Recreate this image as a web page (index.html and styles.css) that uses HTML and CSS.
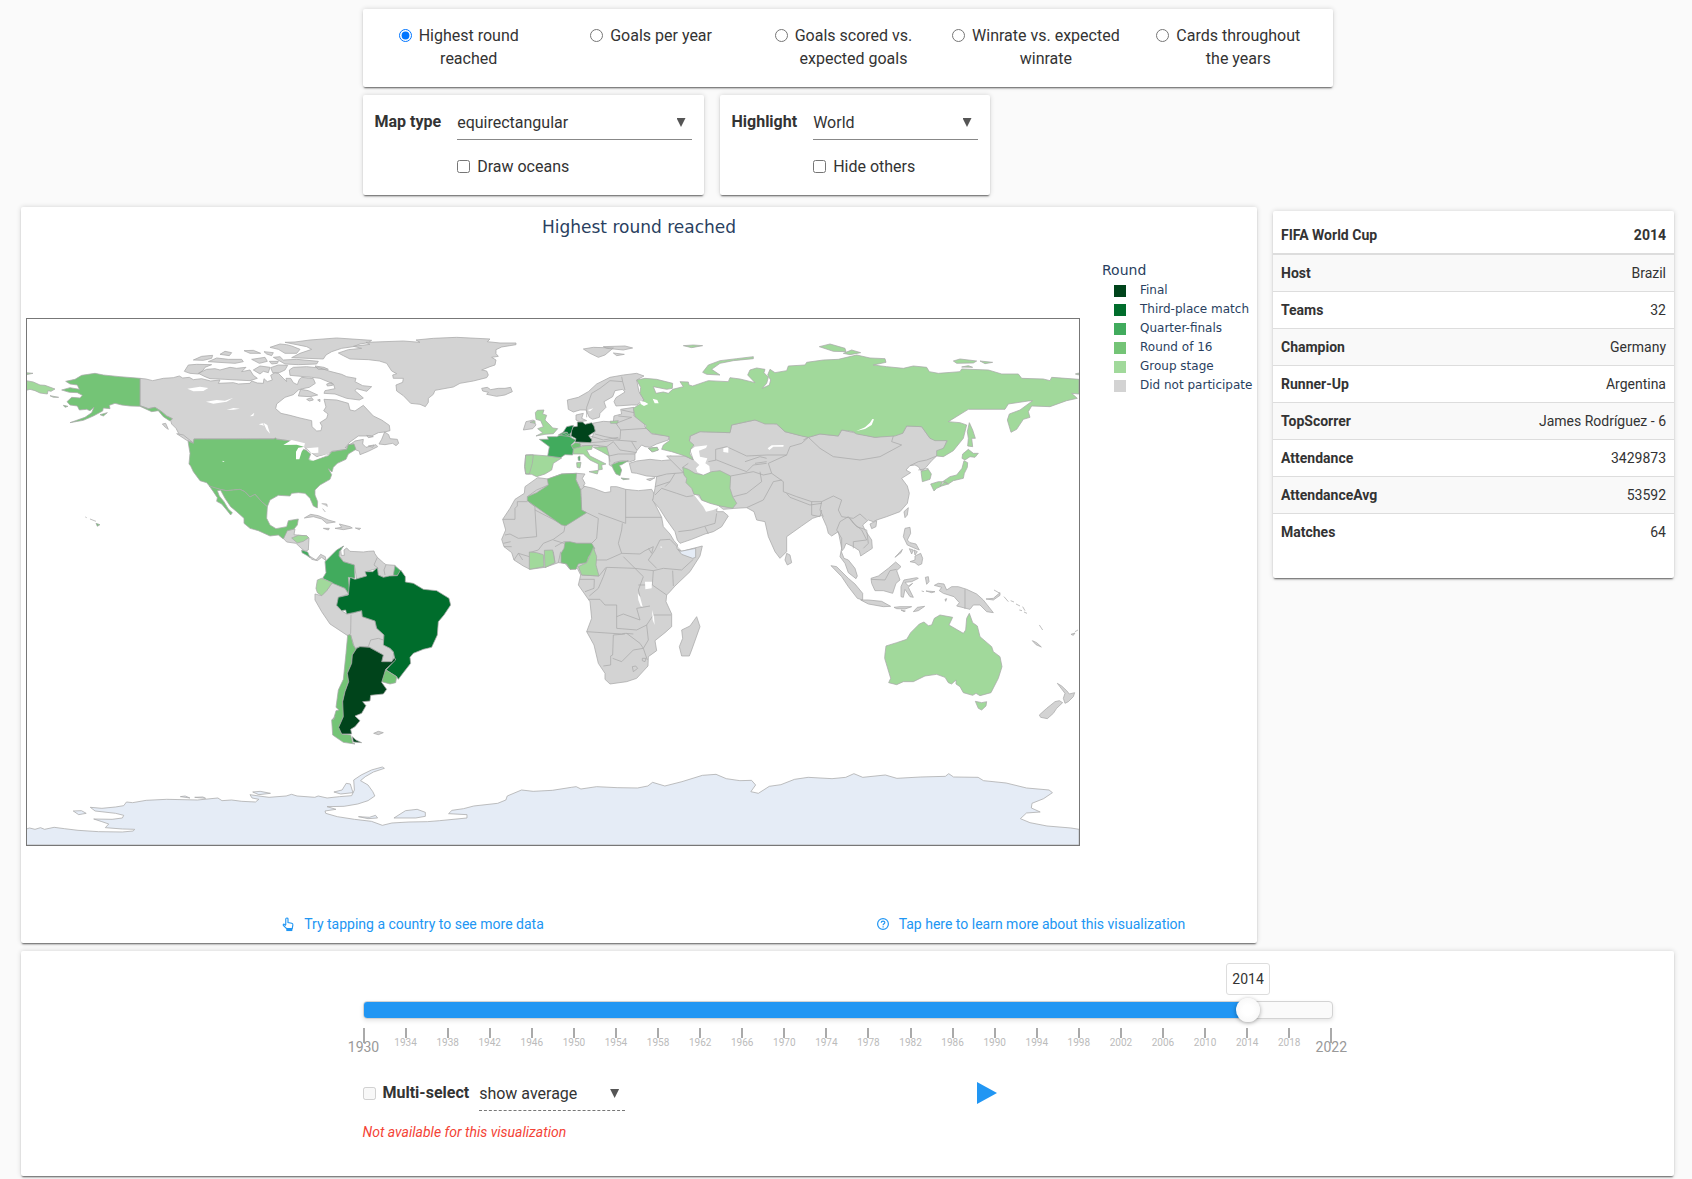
FILE: index.html
```html
<!DOCTYPE html>
<html lang="en">
<head>
<meta charset="utf-8">
<meta name="viewport" content="width=device-width, initial-scale=1">
<title>FIFA World Cup – Highest round reached</title>
<link rel="stylesheet" href="styles.css">
</head>
<body>
<main class="page">
  <div class="controls">
    <form class="card views">
      <label class="view"><input type="radio" name="view" checked><span>Highest round<br>reached</span></label>
      <label class="view"><input type="radio" name="view"><span>Goals per year</span></label>
      <label class="view"><input type="radio" name="view"><span>Goals scored vs.<br>expected goals</span></label>
      <label class="view"><input type="radio" name="view"><span>Winrate vs. expected<br>winrate</span></label>
      <label class="view"><input type="radio" name="view"><span>Cards throughout<br>the years</span></label>
    </form>
    <div class="options">
      <div class="card option option-wide">
        <label class="option-name" for="map-type">Map type</label>
        <span class="picker"><select id="map-type"><option>equirectangular</option></select></span>
        <label class="tick-option"><input type="checkbox">Draw oceans</label>
      </div>
      <div class="card option">
        <label class="option-name" for="highlight">Highlight</label>
        <span class="picker"><select id="highlight"><option>World</option></select></span>
        <label class="tick-option"><input type="checkbox">Hide others</label>
      </div>
    </div>
  </div>

  <div class="main-row">
    <section class="card plot">
      <h1 class="plot-title">Highest round reached</h1>
      <div class="plot-body">
        <svg class="map" viewBox="26 318 1054 528" role="img" aria-label="World map">
          <!-- Antarctica -->
          <g transform="translate(20 740) scale(.6824 .3333)">
            <path class="land empty" d="M9,315V267L14,264 22,268 30,263 36,268 50,262 65,266 85,271 115,275 150,276 166,273 168,268 150,267 125,263 130,252 120,245 108,237 135,238 150,234 152,226 140,220 110,213 103,202 120,205 140,201 152,197 156,186 165,188 185,181 215,178 260,180 290,174 296,182 310,180 325,184 345,186 350,178 340,174 337,164 350,168 365,172 390,168 398,163 406,168 432,172 437,168 450,174 468,170 486,167 490,150 489,120 500,105 515,90 531,81 534,85 518,96 506,110 499,122 510,135 517,155 520,168 510,182 495,192 475,199 450,200 463,208 447,213 448,220 465,230 490,238 515,244 531,256 545,249 570,246 597,245 615,242 655,234 655,224 628,221 633,211 650,206 665,198 700,190 712,180 714,168 735,150 752,154 780,151 808,142 815,140 822,147 845,140 875,143 905,144 920,138 927,127 945,138 970,125 1000,106 1020,103 1035,116 1055,122 1072,121 1078,135 1071,155 1082,160 1098,139 1115,134 1135,118 1155,112 1190,116 1210,112 1222,101 1235,112 1268,105 1285,115 1320,111 1356,109 1361,101 1368,111 1404,112 1412,122 1445,129 1475,144 1508,150 1513,158 1500,176 1483,190 1482,204 1495,216 1475,219 1466,236 1480,248 1505,258 1540,264 1552,268V315Z"/>
            <path class="land empty" d="M78,213 90,212 97,220 86,224ZM460,156 472,150 478,130 484,132 488,158 470,162ZM548,234 565,212 582,208 594,217 594,229 580,234ZM496,230 512,232 521,226 524,234 510,236ZM341,156 352,154 367,160 350,164ZM235,170 242,168 249,174ZM256,172 268,171 272,175Z"/>
          </g>
          <!-- North America -->
          <g transform="translate(20 310) scale(.33333)">
            <path class="land group" d="M19,212 40,216 60,225 75,226 105,237 93,244 84,242 82,252 60,249 45,242 30,238 19,241ZM19,188 39,190 19,194ZM90,257 116,262 100,262Z"/>
            <path class="land none" d="M360,205 378,207 398,212 430,205 460,203 478,198 488,204 508,202 520,209 545,206 572,213 600,210 595,220 640,218 655,222 690,220 695,213 712,219 730,220 732,206 742,215 757,210 752,196 765,188 775,190 790,205 800,215 798,205 812,205 820,218 832,224 838,208 845,202 880,206 886,220 868,232 848,236 835,240 820,254 795,262 770,282 767,296 783,310 810,316 840,324 875,332 876,350 890,363 903,362 906,348 900,338 920,325 924,312 911,302 918,291 912,268 950,270 985,280 990,300 1005,303 1030,286 1060,318 1085,330 1108,346 1110,362 1094,366 1075,368 1055,378 1015,378 990,396 975,414 1005,393 1030,388 1028,402 1038,412 1068,404 1073,410 1045,424 1020,434 1018,424 1006,419 1000,402 985,404 980,418 935,424 925,433 890,440 850,410 805,392 765,386 522,387 522,400 500,388 478,374 468,355 455,342 452,332 457,326 440,318 425,305 405,292 385,296 360,287Z"/>
            <path class="land none" d="M427,342 437,340 445,358 436,352ZM470,371 490,375 518,397 500,391ZM1094,366 1106,374 1110,386 1132,388 1136,400 1128,407 1118,400 1095,404 1077,402 1085,388ZM1040,376 1060,380 1045,383ZM1045,408 1062,405 1058,412Z"/>
            <path class="land none" d="M493,184 505,165 530,163 575,164 555,172 550,180 535,192 510,190ZM535,190 560,178 585,176 600,180 630,172 650,175 678,172 665,185 690,180 700,196 712,205 690,212 650,210 615,208 570,206 555,200ZM520,150 545,139 578,136 575,145 550,151ZM565,155 590,144 625,148 665,148 670,155 645,160ZM600,133 615,124 635,128 628,137ZM672,122 700,121 722,130 690,130ZM695,148 735,142 742,154 718,160ZM700,180 720,168 750,172 745,188 730,184 720,192ZM732,125 760,128 755,137 740,132ZM748,154 775,154 772,160 755,162ZM760,142 780,140 790,150 830,148 895,154 890,162 835,164 795,162ZM750,112 780,102 800,104 815,108 840,118 830,130 795,130 775,118ZM795,97 825,96 870,90 950,84 1055,91 1045,98 1020,102 1000,110 965,115 935,125 918,135 910,147 815,143 840,130 875,118 860,110ZM752,173 775,165 803,166 795,180 778,188 758,188ZM808,180 820,172 860,170 900,174 930,184 965,193 980,200 1008,205 1005,215 1028,227 1055,230 1040,244 1010,236 1005,242 1030,264 1018,270 980,265 945,252 912,250 915,242 945,236 940,222 900,205 875,202 810,196ZM885,168 912,172 925,178 895,178ZM835,258 842,238 865,242 893,255 870,260ZM860,268 875,263 880,270 868,273ZM893,270 900,268 900,275ZM920,222 935,218 938,226 922,228Z"/>
            <path class="land none" d="M790,685 800,662 825,657 822,674 860,678 867,684 865,720 855,724 845,716 828,700 800,696ZM868,738 888,750 902,733 916,740 918,752 905,742 892,752 875,748ZM853,624 872,613 895,617 925,630 946,636 920,640 905,627 880,620ZM945,655 965,652 958,642 990,650 997,654 970,659ZM910,655 928,655 925,660ZM1006,654 1022,655 1018,659ZM905,581 920,582 922,590M908,596 916,606"/>
            <path class="land r16" d="M360,205 300,200 250,195 225,190 185,196 165,208 137,214 150,222 172,225 178,238 150,233 125,240 148,247 172,248 187,256 180,264 155,262 141,275 150,285 172,288 178,300 200,298 210,302 222,292 215,308 195,322 150,338 190,331 220,318 248,303 250,294 270,296 268,286 285,280 305,285 330,288 360,289 395,305 415,302 430,320 450,333 457,326 440,318 425,305 405,292 385,296 360,287ZM130,286 144,289 135,292ZM240,314 262,308 250,318Z"/>
            <path class="land r16" d="M522,387H763L766,383 770,388 805,392 832,402 852,410 848,418 858,420 872,432 866,448 885,450 925,437 935,425 980,418 985,404 1002,402 1008,418 985,432 978,448 952,460 940,472 936,486 925,476 935,494 930,508 900,525 885,540 885,555 893,575 892,594 880,588 870,565 855,550 835,548 815,550 810,558 775,556 750,570 742,590 725,575 705,553 690,561 675,545 660,538 620,542 600,538 570,530 560,518 540,512 520,485 512,468 507,462 510,430 504,393 520,400Z"/>
            <path class="land r16" d="M568,528 600,538 620,542 660,538 675,545 690,561 705,553 725,575 742,590 740,625 750,645 768,656 800,650 805,632 835,627 832,645 822,657 802,662 790,687 775,675 750,678 715,662 690,655 672,640 672,625 650,605 632,590 615,565 602,541 592,542 598,558 612,575 625,597 637,608 632,615 620,600 605,582 590,574 592,563 580,545ZM196,621 200,623M210,627 228,634M228,640 240,644 232,649Z"/>
            <path class="land group" d="M815,684 835,676 860,677 866,683 850,694 832,699Z"/>
            <path class="land quarter" d="M845,720 863,726 870,743 860,736 846,728Z"/>
            <path class="water" d="M790,405 815,390 855,400 852,410 830,404ZM828,448 828,425 835,413 855,410 845,425 838,448ZM860,415 895,412 895,428 875,430ZM866,450 895,440 930,430 905,442 880,452ZM502,236 540,230 565,234 550,243 520,244ZM558,275 590,270 615,272 640,263 620,275 580,281ZM620,300 640,294 660,296 640,299ZM690,319 703,308 700,318ZM716,343 728,340 732,347ZM730,338 742,345 750,371 740,360ZM608,452 614,456 608,456Z"/>
          </g>
          <!-- Greenland and Iceland -->
          <g transform="translate(260 325) scale(.33333)">
            <path class="land none" d="M235,84 265,74 305,70 280,64 330,58 318,52 430,48 480,52 468,45 520,40 590,37 690,42 682,50 720,54 768,54 768,59 725,66 708,74 708,86 715,94 695,97 708,105 705,120 690,125 665,135 680,138 685,150 680,158 640,168 600,175 580,186 525,196 520,208 505,220 505,232 496,245 480,238 452,235 430,212 410,198 408,180 428,172 430,160 400,160 398,150 410,146 395,138 380,115 358,108 325,104 270,102 250,92Z"/>
            <path class="land none" d="M665,190 682,187 692,194 715,190 735,190 752,187 757,200 735,210 710,214 680,208 685,202 668,198Z"/>
          </g>
          <!-- South America -->
          <g transform="translate(300 520) scale(.33333)">
            <path class="land none" d="M130,78 122,90 124,106 133,106 132,90 140,84 150,94 190,96 205,94 222,93 224,100 232,112 250,128 258,134 285,136 282,165 292,167 250,172 235,165 232,145 198,155 200,168 170,178 163,135 130,125 117,108 118,95Z"/>
            <path class="land none" d="M97,188 135,205 146,222 115,232 110,258 125,272 140,282 155,280 185,272 187,290 225,303 230,325 250,335 252,375 270,385 281,398 278,427 245,425 250,405 210,382 180,380 165,388 152,345 143,347 90,312 65,275 45,240 45,222 65,227 80,212Z"/>
            <path class="border" d="M153,284 152,340 145,347M165,385 180,380 205,380 212,360 235,355 250,360M232,112 222,135 235,145M258,134 252,150 255,165"/>
            <path class="land quarter" d="M131,78 118,95 117,108 130,125 163,135 165,175 145,172 148,205 146,222 135,205 98,190 68,175 78,158 75,125 95,105 110,90ZM285,137 302,152 292,167 280,165Z"/>
            <path class="land third" d="M302,150 316,170 316,186 340,190 370,208 410,212 447,235 452,255 432,285 415,305 412,345 395,382 370,388 340,400 330,412 332,430 310,458 295,478 290,470 258,450 285,420 280,395 270,385 250,375 252,345 230,325 225,303 187,290 185,272 160,278 140,282 137,270 125,272 110,256 115,232 145,225 150,172 165,178 200,168 195,155 218,155 232,143 235,165 250,172 268,168 292,167Z"/>
            <path class="land group" d="M65,175 97,188 80,212 65,227 52,218 48,205 52,180Z"/>
            <path class="land r16" d="M143,345 152,345 160,375 168,388 157,405 155,430 142,460 146,485 135,515 128,545 132,585 118,620 125,642 152,645 158,668 165,672 130,667 98,645 95,600 105,590 100,600 108,572 117,570 108,562 115,510 130,478 138,400Z"/>
            <path class="land r16" d="M258,450 290,470 287,488 270,492 245,485 248,465Z"/>
            <path class="land final" d="M170,385 180,380 208,382 250,405 245,425 275,425 283,413 287,420 257,448 245,487 260,508 250,522 212,526 210,543 188,545 198,557 185,580 165,588 180,602 165,620 152,628 155,642 125,642 116,622 130,590 128,545 135,515 146,485 142,460 155,430 157,405ZM157,650 168,660 185,668 160,666Z"/>
            <path class="land none" d="M221,640 235,634 250,638 235,644Z"/>
          </g>
          <!-- Europe and Africa -->
          <g transform="translate(490 330) scale(.33333)">
            <path class="land none" d="M143,443 175,447 215,432 260,430 285,432 277,445 285,460 280,468 310,475 345,488 362,485 362,470 380,470 407,478 445,482 485,478 497,500 488,508 515,562 520,590 540,612 552,632 563,645 560,655 575,664 637,648 630,678 600,725 555,768 540,785 530,795 528,815 545,852 545,890 525,908 495,932 500,962 475,980 474,1008 440,1045 410,1055 360,1062 345,1048 345,1030 325,1000 312,945 290,905 305,865 300,815 265,765 272,735 262,715 240,718 225,700 205,698 165,712 120,718 100,708 72,690 65,668 42,650 35,628 47,600 38,568 60,535 75,508 103,490 105,470Z"/>
            <path class="land none" d="M620,860 630,890 605,960 598,978 575,978 568,950 578,925 575,900 600,888Z"/>
            <path class="border" d="M38,568H75V535L82,528V515H112M112,500 140,480 175,465M112,512 135,530 135,540 140,620 85,625 60,612 45,615M135,540 225,587 222,605 190,628 160,640 145,660 118,668M290,548 325,565 320,625 305,640 260,640 222,635 195,650M258,450 272,480M285,468 272,480 275,540 290,548M407,478V580L325,550M407,562H515M397,580 395,600 385,640 395,670 350,690 318,690M395,670 450,672 465,662 490,650 485,670 475,655M400,680 435,715 490,722 520,715 575,720 610,688M490,722 487,765 530,795M548,722 550,768M510,630 495,660 475,690 500,715M510,630 540,628 575,664M435,715 350,712 340,740 325,775 298,798M295,808 330,808 345,825 380,825 380,895M290,905 395,912 405,910 430,912M380,860 400,852 450,870 440,835 480,828M435,715 460,740 445,780 450,800M445,765 487,765M380,895 440,900 470,885 490,855 543,855M405,912 370,915 368,975 362,978V1005L340,1008M368,985 395,995 430,960 460,955 450,940 410,910M470,885 475,930 460,955 472,990M427,1010 437,1008 443,1015 430,1025ZM457,985 468,985 465,995 457,992ZM275,735 327,738 348,712M270,748 313,748 312,775 285,785M62,635 40,640M42,650 65,650M72,690 85,670 118,680M85,670 98,690M190,665 195,698M212,665 205,698M190,630 222,640"/>
            <path class="land r16" d="M172,447 215,432 260,430 258,450 272,480 275,540 290,548 228,587 215,585 112,512 112,500 140,488 175,465Z"/>
            <path class="land r16" d="M225,636 240,635 260,640 305,640 314,655 295,682 290,698 265,702 258,718 240,718 230,702 213,698 213,670 222,655Z"/>
            <path class="land group" d="M310,652 320,680 318,705 327,738 275,735 265,710 290,698 298,680ZM118,666 140,668 160,674 162,710 118,718ZM163,661 188,660 195,698 165,713Z"/>
            <path class="land empty" d="M563,658 572,664 617,655 617,682 608,685 575,673Z"/>
            <path class="water" d="M465,755 486,755 485,775 466,778ZM443,790 450,800 458,830 452,828 445,810ZM486,840 492,860 494,885 488,870ZM512,648 517,652 512,654Z"/>
            <path class="land none" d="M280,57 310,52 370,54 345,75 325,82 300,70ZM340,50 405,48 428,54 400,60 350,55ZM370,69 403,73 380,77Z"/>
            <path class="land none" d="M232,210 265,202 295,185 320,162 360,142 400,135 440,130 462,138 440,150 447,185 462,210 440,225 425,225 378,228 372,215 378,203 405,186 398,178 375,182 368,200 342,215 348,232 330,250 328,262 308,268 298,262 288,240 270,240 250,246 235,238Z"/>
            <path class="land none" d="M258,270 258,255 280,250 275,265 290,272 268,275ZM100,300 108,275 130,270 138,285 128,296Z"/>
            <path class="land none" d="M307,280 340,274 370,276 372,258 395,252 392,238 432,232 432,258 465,270 465,290 485,312 537,318 535,330 500,342 480,352 465,350 455,345 442,360 435,372 435,390 418,396 395,392 372,398 370,412 358,405 357,378 325,348 285,348 270,345 268,338 300,338 315,300Z"/>
            <path class="land none" d="M418,400 440,393 480,388 515,392 555,388 580,398 590,410 583,430 555,432 500,440 470,438 440,430 425,428ZM470,448 495,443 480,452ZM540,378 582,388 600,395 610,412 580,410 555,392Z"/>
            <path class="border" d="M290,262V232L305,190 330,175 360,152 398,155M398,155 405,180M398,155 395,140M315,312 345,320 390,328 392,300 378,280M392,300 470,295M378,280 425,262M385,258 425,262M395,240 432,248M300,338 340,335 375,330 440,335M310,345 350,350 370,335 390,360 440,368M357,378 385,372 435,372M357,378 360,395M300,318 340,330 385,322M425,335 440,360"/>
            <path class="land group" d="M136,248 142,241 162,240 158,252 170,256 165,270 180,285 188,294 203,296 190,311 165,313 138,318 158,308 143,296 160,290 152,272 138,268ZM107,375 125,374 175,378 215,384 190,400 185,420 165,432 140,440 125,433 107,432 104,410ZM248,355 285,347 308,346 305,358 290,360 300,378 320,388 348,402 335,405 337,418 325,420 325,402 300,390 280,372 250,372ZM297,425 325,421 322,432ZM260,398 273,397 270,414 261,412ZM310,352 350,350 358,378 335,365ZM120,277 135,272 135,280ZM360,274 385,272 382,280H362ZM475,355 500,352 505,360 485,365ZM130,375 127,400 118,432 107,432 104,410 107,375Z"/>
            <path class="land r16" d="M243,348 255,338 270,340 272,350 250,356ZM365,404 385,396 415,392 395,404 388,406 395,420 390,437 378,432 370,418ZM393,444 418,447 400,449Z"/>
            <path class="land quarter" d="M148,328 175,328 172,320 200,320 222,310 242,322 258,331 243,345 250,358 248,375 225,374 212,383 173,378 178,350ZM205,315 220,306 240,308 242,320 225,318ZM264,381 270,378 270,392 265,391Z"/>
            <path class="land third" d="M220,306 230,290 250,286 246,305 236,315 232,307Z"/>
            <path class="land final" d="M262,276 278,276 285,283 305,278 312,288 316,304 296,317 306,330 302,338 255,336 258,326 243,318 245,302 250,290 262,289Z"/>
            <path class="water" d="M293,240 310,235 300,244Z"/>
          </g>
          <!-- Asia -->
          <g transform="translate(620 330) scale(.33333)">
            <path class="land none" d="M140,378 195,378 218,388 212,358 208,333 212,318 240,305 330,308 335,285 405,270 470,282 495,305 565,322 600,312 655,318 665,300 765,322 848,310 860,288 905,290 930,325 980,332 975,350 950,378 935,392 918,412 905,425 895,410 885,405 870,407 858,420 872,428 845,445 862,468 868,490 862,520 840,545 800,560 770,570 760,575 745,570 728,585 735,600 755,630 757,655 722,678 718,662 700,650 678,640 672,655 664,665 672,685 685,690 705,715 712,738 708,746 685,728 675,700 660,680 665,655 655,605 635,618 625,610 620,590 605,556 578,565 545,588 500,620 500,665 480,685 465,665 445,620 435,575 410,570 402,545 380,533 345,535 310,538 300,530 292,525 290,545 310,545 325,558 305,590 280,605 255,612 215,628 180,640 172,630 165,605 140,570 118,535 98,512 105,475 110,440 140,432 190,428Z"/>
            <path class="water" d="M221,493 232,497 245,512 270,520 298,527 292,535 280,540 258,545 250,530 238,515Z"/>
            <path class="land none" d="M500,670 510,675 515,698 502,705 495,690ZM852,545 865,533 862,555 855,563ZM750,582 770,572 768,590 755,596Z"/>
            <path class="border" d="M287,390V358L320,350 380,378 440,375 500,375 510,350 545,340 565,322 600,355 640,380 720,390 780,380 845,345 815,335 820,318M565,322 550,330M500,375 445,400 455,430 490,455 490,485 530,500 575,515 605,515 640,498 665,510 655,540 665,560 700,565 720,552 740,570M265,395 290,390 340,410 380,425 400,405 440,400M332,438 400,425 430,435 455,430M340,500 380,490 425,455 420,425M380,533 430,510 460,455 485,450M500,490 510,502 570,525 605,520M575,515V555L600,560 605,540M605,515 600,540 610,560M660,575 685,560 700,580 725,600 740,630 700,635M660,575 650,600 665,625 665,660M690,565 710,590 740,600 745,640 730,655M700,635 700,655M105,470 150,455 165,430M105,495 125,475 170,490 200,500 220,497M150,455 135,470M175,605 215,600 250,590 285,580 290,550M255,590 265,612M188,412 205,400M870,407 895,395 920,390 950,378M895,420 925,415M405,400 440,395M375,395 420,380 440,385"/>
            <path class="land group" d="M188,412 205,418 225,430 250,435 275,425 300,422 332,438 330,475 338,500 350,520 338,535 300,528 270,520 245,510 238,495 222,493 215,475 198,458 200,445 192,435Z"/>
            <path class="water" d="M211,360 225,350 262,346 258,354 237,362 240,380 262,385 256,400 268,408 270,425 250,434 232,427 228,415 238,405 222,390Z"/>
            <path class="land group" d="M50,150 75,145 110,148 158,160 157,175 140,178 100,170 108,190 130,186 145,190 158,178 190,170 180,155 205,156 207,165 218,168 265,152 325,155 330,143 360,147 405,158 383,135 390,120 410,114 435,118 432,128 445,142 440,160 427,175 448,165 452,150 443,135 450,118 465,128 500,122 505,108 555,105 560,97 610,90 655,88 710,75 750,84 795,86 798,97 760,105 800,110 850,115 880,108 920,112 928,125 955,130 1020,125 1025,117 1105,120 1145,132 1195,132 1205,145 1270,147 1290,152 1295,142 1377,148V192L1355,190 1372,205 1340,212 1290,230 1235,228 1225,245 1230,262 1210,268 1190,298 1173,307 1162,270 1168,252 1200,240 1238,212 1225,213 1165,222 1155,238 1045,238 985,275 1020,278 1040,285 1030,325 1000,362 970,380 950,378 950,362 970,355 982,332 945,332 930,325 905,290 860,288 848,310 825,318 765,322 710,312 700,305 665,300 655,318 600,312 565,322 545,318 495,305 470,282 435,282 405,270 380,275 335,285 330,308 240,305 210,318 208,333 222,345 212,358 210,372 220,390 195,378 155,365 125,358 130,345 148,332 148,320 95,310 75,292 80,288 45,260 40,235 60,222 72,210 60,190 62,172Z"/>
            <path class="land group" d="M248,127 265,105 300,92 350,86 400,80 400,86 340,92 300,100 275,118 300,135 260,133ZM190,47 220,45 248,47 215,53ZM598,50 630,42 675,55 678,65 640,64ZM670,70 695,60 722,68 690,74ZM1000,93 1020,87 1070,93 1060,99 1010,100ZM1080,93 1118,97 1095,101ZM1025,111 1045,107 1058,112ZM1366,132 1376,129V135ZM1042,305 1048,278 1058,300 1066,325 1055,325 1058,350 1043,348 1045,325ZM1026,385 1028,372 1045,358 1060,370 1075,370 1065,382 1050,380 1035,390ZM1032,392 1043,398 1042,412 1033,430 1030,445 1000,452 985,462 968,455 990,440 1010,435 1026,415ZM932,462 955,455 968,455 960,468 975,455 985,462 965,468 950,475 942,483ZM903,424 925,418 934,432 930,448 907,455Z"/>
            <path class="water" d="M60,212 75,216 85,222 72,228 62,222ZM98,206 112,210 116,220 104,220ZM709,303 735,292 750,278 757,267 762,268 755,285 735,297ZM443,355 455,346 491,345 490,350 460,350 448,360ZM310,355 325,352 325,368 310,366Z"/>
            <path class="land group" d="M85,355 112,352 115,360 98,366Z"/>
          </g>
          <!-- South-east Asia and Oceania -->
          <g transform="translate(800 400) scale(.33333)">
            <path class="land none" d="M93,497 110,500 145,535 165,552 188,580 188,600 172,595 145,560 125,530ZM182,600 205,600 245,604 272,619 250,620 205,612ZM213,535 235,528 265,505 287,486 303,500 290,512 300,540 288,550 278,580 250,572 225,572 215,550ZM303,590 303,560 312,540 350,533 355,535 335,545 315,547 325,558 338,550 325,562 340,592 330,590 315,568 310,592ZM376,532 385,530 387,545 380,553ZM365,573 372,575M378,573 405,575 395,578ZM282,622 300,620 335,620 315,627 290,626ZM303,630 316,633 312,635ZM340,635 352,622 374,619 355,632ZM403,556 415,550 432,552 440,570 455,560 475,560 500,568 530,582 550,600 580,638 560,635 540,615 520,615 510,628 470,618 478,608 462,590 430,580 418,572 425,562ZM435,598 440,596 437,604ZM558,597 580,595 600,578 600,586 580,600ZM582,570 600,580M612,590 625,605M632,602 642,606M648,612 660,618M668,620 675,632M658,630 666,632M672,636 681,640M718,675 728,690M697,722 710,728 724,741 708,734ZM813,703 825,699 820,706ZM825,695 834,690M772,850 785,858 800,872 808,882 824,878 820,890 805,905 795,910 790,895 795,880ZM718,945 740,925 765,905 778,902 788,908 770,925 760,940 742,956 722,952ZM310,410 315,385 330,382 332,400 322,420 330,428 348,432 358,450 345,445 322,435ZM330,485 345,480 345,468 362,460 368,475 365,492 355,496 345,488ZM328,446 340,450 335,462ZM342,450 352,455 345,465ZM285,472 307,448 303,458Z"/>
            <path class="border" d="M495,568V627M213,538 255,540 270,512 290,508"/>
            <path class="land group" d="M258,738 290,728 320,718 332,698 358,672 372,666 385,677 395,675 403,655 420,645 458,652 447,675 490,700 497,690 500,655 508,640 518,668 532,678 540,710 575,740 580,755 600,770 606,800 595,835 573,878 540,887 528,880 518,886 490,878 480,860 468,852 468,840 455,852 445,848 435,832 410,823 375,828 340,845 310,845 290,854 266,848 272,835 254,775 255,762ZM526,904 545,908 560,905 558,918 545,930 535,925Z"/>
          </g>
          <rect class="frame" x="26.500" y="318.500" width="1053" height="527"/>
        </svg>
        <div class="legend">
          <h2 class="legend-title">Round</h2>
          <ul class="legend-list">
            <li><i class="swatch sw-final"></i>Final</li>
            <li><i class="swatch sw-third"></i>Third-place match</li>
            <li><i class="swatch sw-quarter"></i>Quarter-finals</li>
            <li><i class="swatch sw-r16"></i>Round of 16</li>
            <li><i class="swatch sw-group"></i>Group stage</li>
            <li><i class="swatch sw-none"></i>Did not participate</li>
          </ul>
        </div>
      </div>
      <div class="hints">
        <a class="hint" href="#country"><svg class="hand-icon" viewBox="0 0 12 16" aria-hidden="true"><path d="M3.600 8.500V2.200a1.200 1.200 0 0 1 2.400 0V5.800l4 .8q1.300.4 1.200 1.800l-.7 4H4.600L1 8.900Q.6 7.800 1.700 7.500l1.900 1.700"/><path class="solid" d="M4.200 12h6.400v3H4.200z"/></svg>Try tapping a country to see more data</a>
        <a class="hint" href="#about"><svg class="help-icon" viewBox="0 0 12 12" aria-hidden="true"><circle cx="6" cy="6" r="5.400"/><path d="M4.200 4.700C4.300 2.600 7.900 2.700 7.800 4.700 7.700 5.800 6.100 5.900 6.100 7.200"/><path d="M6.100 8.300V9.600"/></svg>Tap here to learn more about this visualization</a>
      </div>
    </section>

    <aside class="card facts">
      <table>
        <thead><tr><th scope="col">FIFA World Cup</th><th scope="col">2014</th></tr></thead>
        <tbody>
          <tr><th scope="row">Host</th><td>Brazil</td></tr>
          <tr><th scope="row">Teams</th><td>32</td></tr>
          <tr><th scope="row">Champion</th><td>Germany</td></tr>
          <tr><th scope="row">Runner-Up</th><td>Argentina</td></tr>
          <tr><th scope="row">TopScorrer</th><td>James Rodríguez - 6</td></tr>
          <tr><th scope="row">Attendance</th><td>3429873</td></tr>
          <tr><th scope="row">AttendanceAvg</th><td>53592</td></tr>
          <tr><th scope="row">Matches</th><td>64</td></tr>
        </tbody>
      </table>
    </aside>
  </div>

  <section class="card timeline">
    <div class="timeline-inner">
      <div class="bubble-row"><output class="bubble" for="year" style="left:91.3%">2014</output></div>
      <div class="slider">
        <div class="track"><div class="fill" style="width:91.3%"></div></div>
        <input id="year" class="range" type="range" min="1930" max="2022" step="4" value="2014" aria-label="Year">
      </div>
      <ol class="scale">
        <li class="end">1930</li><li>1934</li><li>1938</li><li>1942</li><li>1946</li><li>1950</li><li>1954</li><li>1958</li><li>1962</li><li>1966</li><li>1970</li><li>1974</li><li>1978</li><li>1982</li><li>1986</li><li>1990</li><li>1994</li><li>1998</li><li>2002</li><li>2006</li><li>2010</li><li>2014</li><li>2018</li><li class="end">2022</li>
      </ol>
      <div class="playback">
        <div class="multi">
          <label class="multi-label"><input type="checkbox" disabled>Multi-select</label>
          <span class="picker picker-off"><select aria-label="Multi-select mode" disabled><option>show average</option></select></span>
        </div>
        <button class="play" type="button" aria-label="Play"><svg viewBox="0 0 20 22" aria-hidden="true"><path d="M0 0 20 11 0 22z"/></svg></button>
      </div>
      <p class="notice">Not available for this visualization</p>
    </div>
  </section>
</main>
</body>
</html>
```
FILE: styles.css
```css
* { box-sizing: border-box; }

body {
  margin: 0;
  background: #fafafa;
  color: #333;
  font: 16px/23px Roboto, "Liberation Sans", sans-serif;
}

.page {
  display: flex;
  flex-direction: column;
  gap: 8px;
  padding: 9px 18px 3px 21px;
}

.card {
  background: #fff;
  border-radius: 2px;
  box-shadow: 0 0 5px rgba(0, 0, 0, .16), 0 2px 2px -1px rgba(0, 0, 0, .6);
}

input { margin: 0; }
select, button { font: inherit; color: inherit; }

/* View and map controls */
.controls {
  display: flex;
  flex-direction: column;
  gap: 8px;
  width: 100%;
  max-width: 970px;
  margin: 0 auto 4px;
}

.views {
  display: grid;
  grid-template-columns: repeat(5, 1fr);
  padding: 15px 8px 17px 0;
}

.view {
  display: flex;
  justify-content: center;
  align-items: flex-start;
  gap: 7px;
  text-align: center;
  white-space: nowrap;
}

.view input { width: 13px; height: 13px; margin-top: 5px; }

.options { display: flex; gap: 16px; }

.option {
  display: grid;
  grid-template-columns: auto 1fr;
  column-gap: 16px;
  row-gap: 15px;
  width: 270px;
  padding: 11px 12px 17px;
}

.option-wide { width: 341px; }

.option-name { font-weight: 700; line-height: 32px; }

.picker { position: relative; display: block; }

.picker select {
  display: block;
  width: 100%;
  height: 34px;
  padding: 0 28px 0 0;
  appearance: none;
  background: none;
  border: 0;
  border-bottom: 1px solid #888;
  border-radius: 0;
}

.picker::after {
  content: "";
  position: absolute;
  right: 6px;
  top: 12px;
  width: 9px;
  height: 9px;
  background: #555;
  clip-path: polygon(0 0, 100% 0, 50% 100%);
  pointer-events: none;
}

.picker-off { width: 146px; }
.picker-off select { border-bottom: 1px dashed #777; opacity: 1; }

.tick-option {
  grid-column: 2;
  display: flex;
  align-items: center;
  gap: 7px;
}

.tick-option input, .multi-label input { width: 13px; height: 13px; }

/* Map and facts */
.main-row {
  display: grid;
  grid-template-columns: minmax(0, 1236fr) minmax(0, 401fr);
  gap: 16px;
  align-items: start;
}

.plot {
  padding: 10px 0 9px;
  color: #2a3f5f;
}

.plot-title {
  margin: 0;
  text-align: center;
  font: 400 17px/20px "DejaVu Sans", sans-serif;
}

.plot-body {
  display: grid;
  grid-template-columns: minmax(0, 1fr) 155px;
  gap: 22px;
  padding-left: 5px;
}

.map {
  display: block;
  width: 100%;
  height: auto;
  margin: 81px 0 68px;
}

.land, .border {
  stroke: #aaa;
  stroke-opacity: .75;
  stroke-width: 1;
  stroke-linejoin: round;
  vector-effect: non-scaling-stroke;
}

.border { fill: none; }
.water { fill: #fff; }
.final { fill: #00441b; }
.third { fill: #006d2c; }
.quarter { fill: #41ab5d; }
.r16 { fill: #74c476; }
.group { fill: #a1d99b; }
.none { fill: #d3d3d3; }
.empty { fill: #e5ecf6; }
.frame { fill: none; stroke: #777; stroke-width: 1; }

.legend { padding-top: 23px; font: 12px/19px "DejaVu Sans", sans-serif; }
.legend-title { margin: 0; font: 400 14px/21px "DejaVu Sans", sans-serif; }
.legend-list { margin: 0; padding: 0 0 0 12px; list-style: none; }
.legend-list li { display: flex; align-items: center; gap: 14px; white-space: nowrap; }
.swatch { width: 12px; height: 12px; }
.sw-final { background: #00441b; }
.sw-third { background: #006d2c; }
.sw-quarter { background: #41ab5d; }
.sw-r16 { background: #74c476; }
.sw-group { background: #a1d99b; }
.sw-none { background: #d3d3d3; }

.hints { display: grid; grid-template-columns: 1fr 1fr; }

.hint {
  display: flex;
  align-items: center;
  justify-content: center;
  gap: 10px;
  padding-left: 166px;
  color: #2196f3;
  font-size: 14px;
  line-height: 20px;
  text-decoration: none;
}

.hand-icon, .help-icon { fill: none; stroke: currentColor; stroke-width: 1.200; }
.hand-icon { width: 12px; height: 15px; }
.hand-icon .solid { fill: currentColor; stroke: none; }
.help-icon { width: 12px; height: 12px; }

.facts { margin-top: 4px; padding: 5px 0 28px; }

.facts table {
  width: 100%;
  border-collapse: collapse;
  font-size: 14px;
  line-height: 20px;
}

.facts th, .facts td { height: 37px; padding: 0 8px; text-align: right; }
.facts th:first-child { text-align: left; }
.facts thead th { height: 38px; border-bottom: 2px solid #ddd; }
.facts tbody tr:nth-child(odd) { background: #f9f9f9; }
.facts tbody tr + tr { border-top: 1px solid #ddd; }

/* Year slider */
.timeline { padding: 12px 0 34px; }
.timeline-inner { width: 100%; max-width: 970px; margin: 0 auto; }

.bubble-row { position: relative; height: 32px; }

.bubble {
  position: absolute;
  top: 0;
  width: 44px;
  margin-left: -22px;
  border: 1px solid #ddd;
  border-radius: 3px;
  background: #fff;
  text-align: center;
  font-size: 14px;
  line-height: 30px;
}

.slider {
  display: grid;
  grid-template-rows: 18px;
  align-items: center;
  margin-top: 6px;
}

.track, .range { grid-area: 1 / 1; }

.track {
  height: 18px;
  border: 1px solid #d3d3d3;
  border-radius: 4px;
  background: #fafafa;
  box-shadow: 0 2px 4px rgba(0, 0, 0, .1);
  overflow: hidden;
}

.fill { height: 100%; background: #2196f3; }

.range {
  height: 24px;
  margin: 0 -12px;
  appearance: none;
  background: none;
}

.range::-webkit-slider-thumb {
  appearance: none;
  width: 24px;
  height: 24px;
  border-radius: 50%;
  background: radial-gradient(#fff 30%, #f4f4f4);
  box-shadow: 0 1px 4px rgba(0, 0, 0, .35);
}

.scale {
  display: flex;
  justify-content: space-between;
  height: 28px;
  margin: 9px 1px 21px;
  padding: 0;
  list-style: none;
  color: #bbb;
  font-size: 10px;
  line-height: 9px;
}

.scale li {
  display: flex;
  flex-direction: column;
  align-items: center;
  width: 0;
  white-space: nowrap;
}

.scale li::before {
  content: "";
  flex: none;
  width: 2px;
  height: 10px;
  background: #aaa;
}

.scale .end { color: #999; font-size: 14px; }
.scale .end::before { height: 15px; }

.playback {
  display: grid;
  grid-template-columns: 1fr 356px;
  align-items: start;
}

.multi { display: flex; gap: 10px; }

.multi-label {
  display: flex;
  align-items: center;
  gap: 7px;
  font-weight: 700;
  line-height: 32px;
  height: 32px;
}

.play {
  width: 20px;
  height: 32px;
  padding: 0;
  border: 0;
  background: none;
  color: #2196f3;
}

.play svg { display: block; width: 20px; height: 22px; fill: currentColor; }

.notice {
  margin: 11px 0 0;
  color: #f44336;
  font-size: 14px;
  font-style: italic;
  line-height: 20px;
}
```
